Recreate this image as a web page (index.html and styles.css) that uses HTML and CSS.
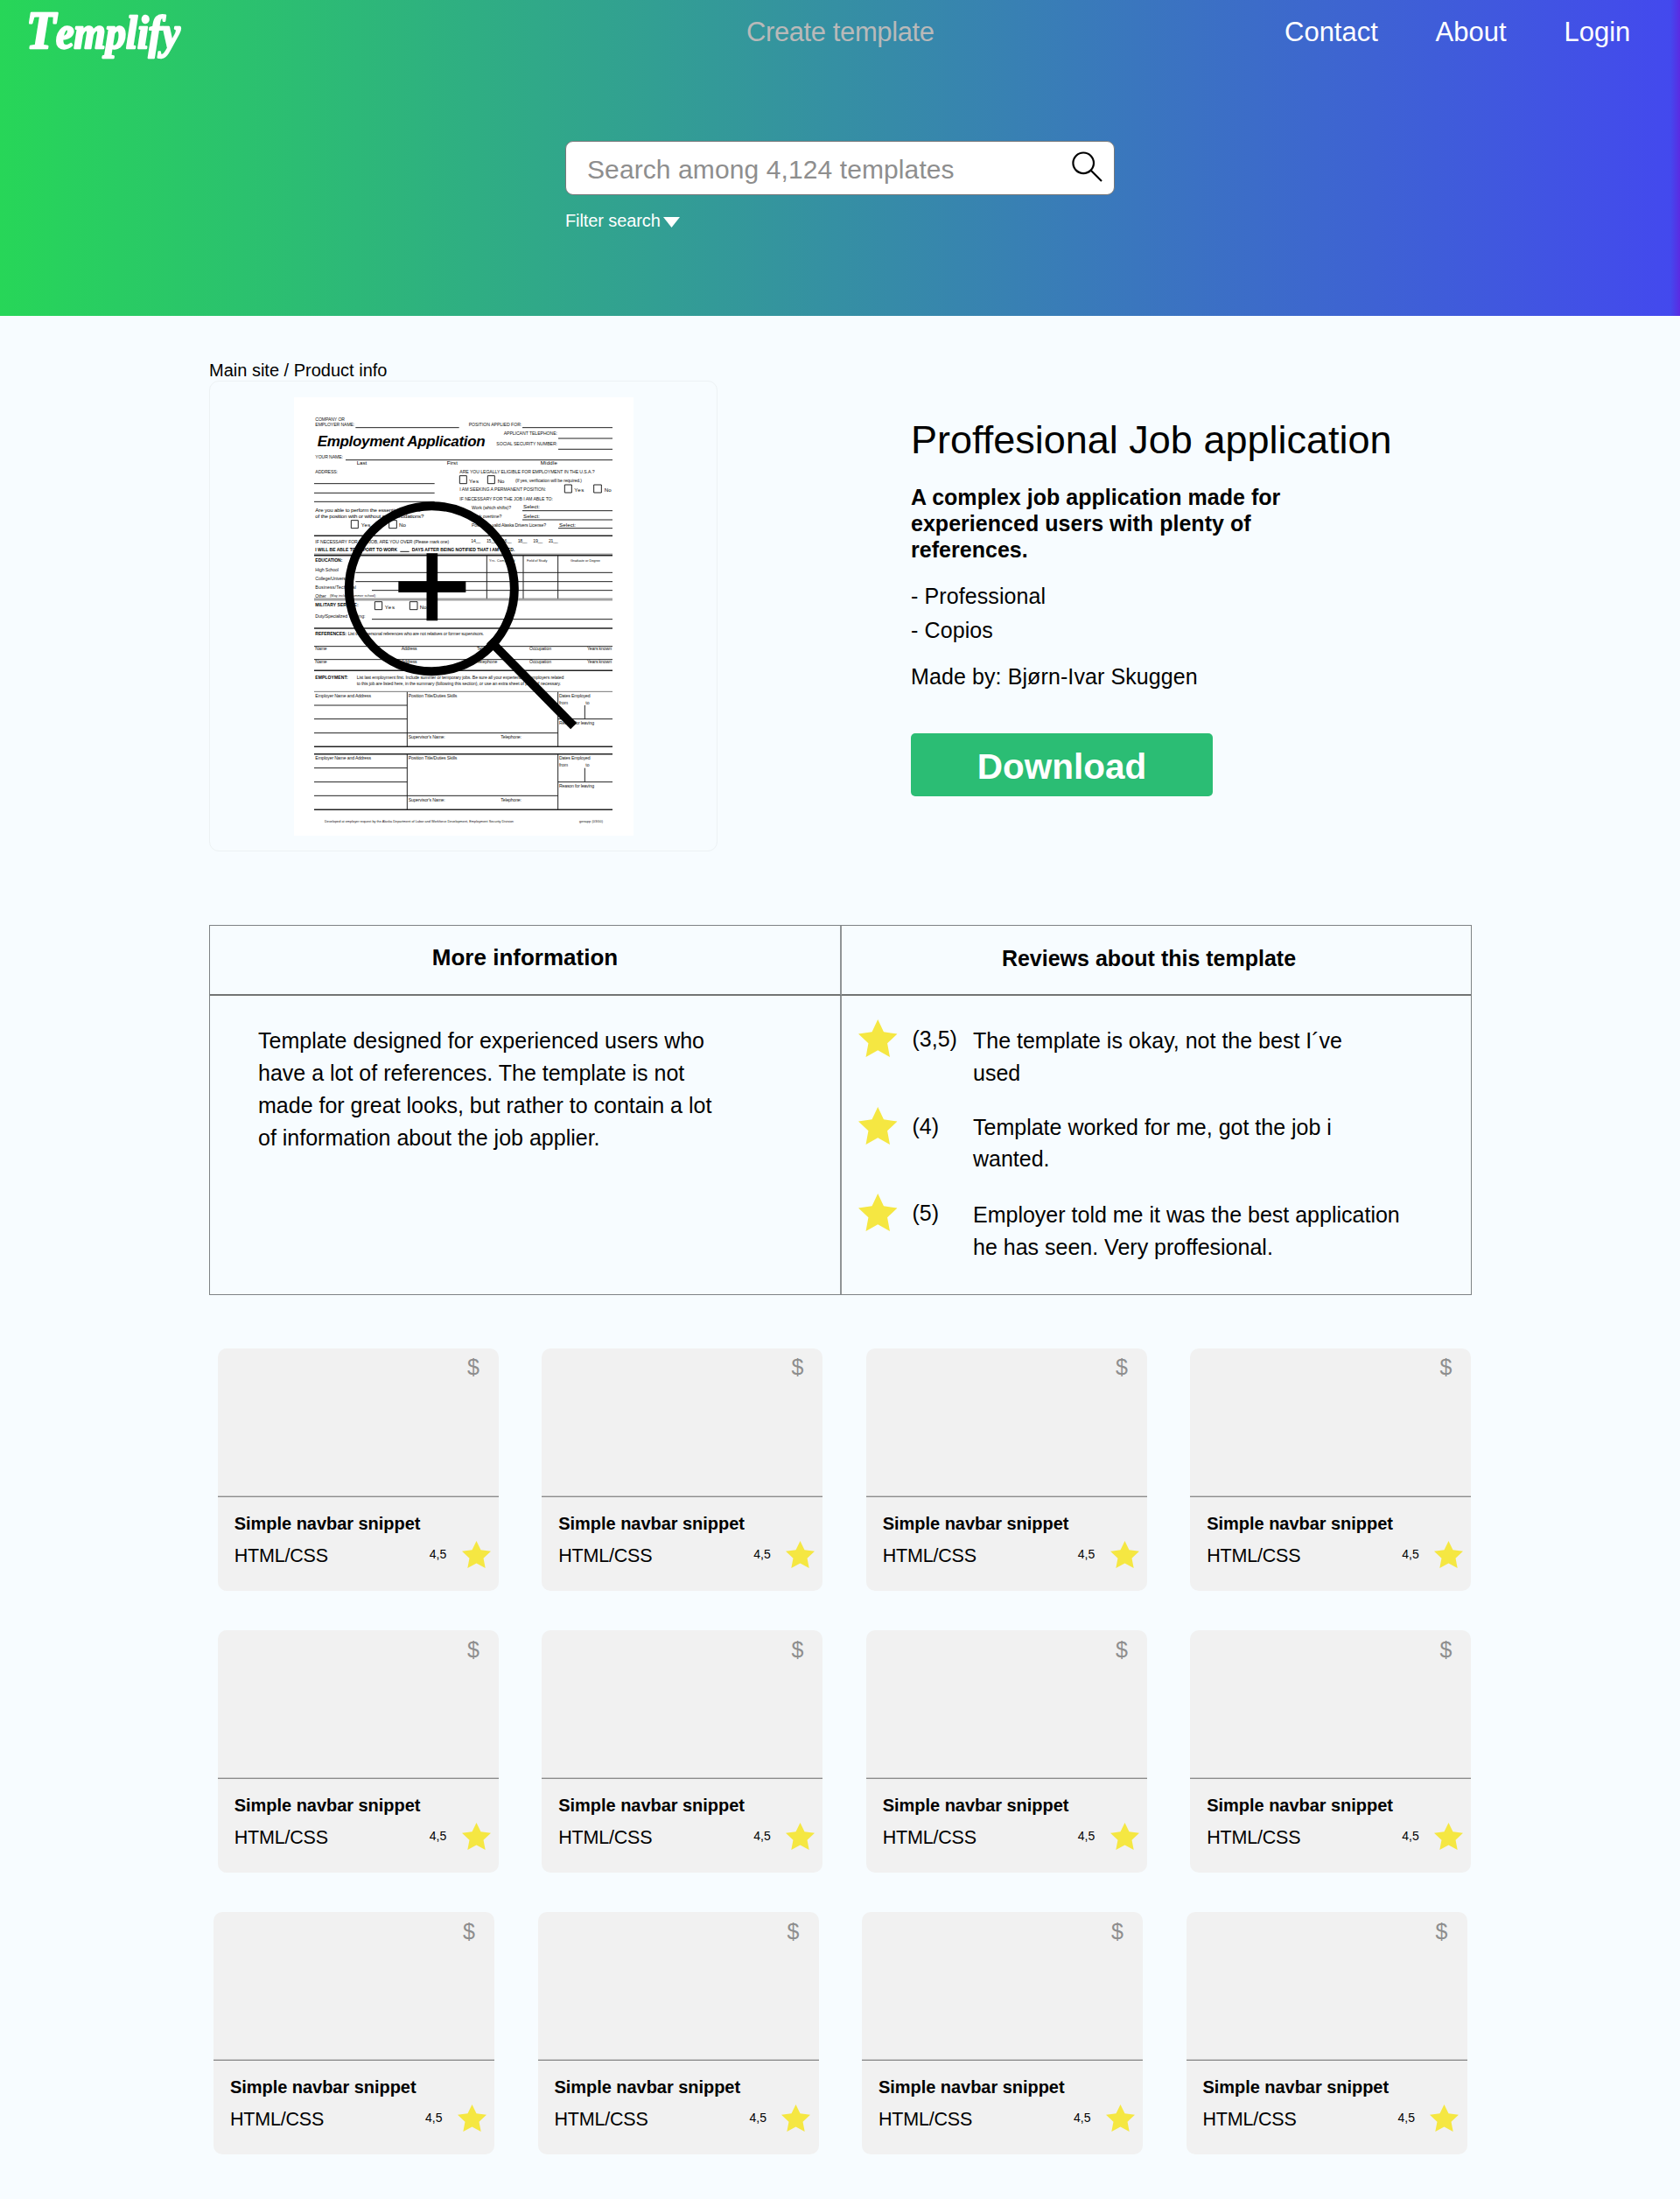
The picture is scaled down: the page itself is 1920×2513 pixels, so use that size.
FILE: index.html
```html
<!DOCTYPE html>
<html lang="en">
<head>
<meta charset="utf-8">
<title>Templify</title>
<link rel="stylesheet" href="styles.css">
</head>
<body>
<svg class="defs" aria-hidden="true">
  <symbol id="star" viewBox="0 0 44.4 42.2" preserveAspectRatio="none">
    <polygon points="22.2,0 28.9,14.1 44.4,16.1 33,26.8 35.9,42.2 22.2,34.7 8.5,42.2 11.4,26.8 0,16.1 15.5,14.1"/>
  </symbol>
</svg>

<header class="hero">
  <nav class="nav">
    <a class="logo"><svg width="200" height="80" viewBox="0 0 200 80"><text x="0" y="55" textLength="176" lengthAdjust="spacingAndGlyphs"><tspan class="logo-cap">T</tspan>emplify</text></svg></a>
    <a class="create">Create template</a>
    <div class="links"><a class="l-contact">Contact</a><a class="l-about">About</a><a class="l-login">Login</a></div>
  </nav>
  <div class="search">
    <div class="search-box">
      <span>Search among 4,124 templates</span>
      <svg class="search-icon" width="26" height="28" viewBox="0 0 26 28"><circle cx="12.200" cy="12.300" r="11.800"/><path d="M20.800 20.700L33 33"/></svg>
    </div>
    <div class="filter"><span>Filter search</span><svg width="19" height="12" viewBox="0 0 19 12"><path d="M0 0H19L9.5 12Z"/></svg></div>
  </div>
</header>

<main class="main">
  <div class="crumb">Main site / Product info</div>
  <section class="product">
    <div class="preview">
      <svg class="sheet" width="388" height="501" viewBox="18 -19 1164 1503">
        <rect class="paper" x="18" y="-19" width="1164" height="1503"/>
        <g class="thin">
          <path d="M229 85H584M801 85H1110M924 122H1110M924 159H1110M195 196H1110M87 277H500M87 309H500M87 339H500M801 370H1110M801 401H1110M924 430H1110M382 510H413"/>
          <path d="M229 582H1110M229 613H1110M285 643H1110M679 523V672M804 523V672M923 523V672M285 742H1110"/>
          <path d="M87 835H1110M87 880H1110M87 1037H406M87 1084H406M87 1132H923M406 990V1178M923 990V1178M923 1084H1110M1015 1037V1084"/>
          <path d="M87 1252H406M87 1300H406M87 1347H923M406 1204V1395M923 1204V1395M923 1300H1110M1015 1252V1300"/>
          <path d="M586 250h24v27h-24zM682 250h24v27h-24zM946 281h24v27h-24zM1046 281h26v27h-26zM214 403h24v27h-24zM344 403h26v27h-26zM295 682h25v27h-25zM415 682h26v27h-26z"/>
        </g>
        <g class="double">
          <path d="M87 671.5H1110M87 676.5H1110M87 518.5H1110M87 990H1110"/>
        </g>
        <g class="thick"><path d="M87 456H1110M87 523H1110M87 773H1110M87 918H1110M87 1179H1110M87 1204.500H1110M87 1395H1110"/></g>
        <g class="form">
          <text x="91" y="63" textLength="101">COMPANY OR</text>
          <text x="91" y="81" textLength="135">EMPLOYER NAME:</text>
          <text x="617" y="81" textLength="182">POSITION APPLIED FOR:</text>
          <text x="737" y="111" textLength="184">APPLICANT TELEPHONE:</text>
          <text x="712" y="147" textLength="209">SOCIAL SECURITY NUMBER:</text>
          <text class="headline" x="98" y="148" textLength="576">Employment Application</text>
          <text x="91" y="192" textLength="95">YOUR NAME:</text>
          <text class="md" x="233" y="213" textLength="35">Last</text>
          <text class="md" x="542" y="213" textLength="37">First</text>
          <text class="md" x="863" y="213" textLength="58">Middle</text>
          <text x="91" y="243" textLength="77">ADDRESS:</text>
          <text x="586" y="243" textLength="463">ARE YOU LEGALLY ELIGIBLE FOR EMPLOYMENT IN THE U.S.A.?</text>
          <text class="md" x="618" y="274" textLength="33">Yes</text>
          <text class="md" x="716" y="274" textLength="23">No</text>
          <text x="777" y="273" textLength="228">(If yes, verification will be required.)</text>
          <text x="586" y="303" textLength="296">I AM SEEKING A PERMANENT POSITION:</text>
          <text class="md" x="979" y="304" textLength="33">Yes</text>
          <text class="md" x="1082" y="304" textLength="24">No</text>
          <text x="586" y="335" textLength="320">IF NECESSARY FOR THE JOB I AM ABLE TO:</text>
          <text x="627" y="365" textLength="135">Work (which shifts)?</text>
          <text class="md" x="804" y="363" textLength="57">Select:</text>
          <text x="627" y="395" textLength="103">Work overtime?</text>
          <text class="md" x="804" y="394" textLength="57">Select:</text>
          <text x="627" y="425" textLength="255">Possess a valid Alaska Drivers License?</text>
          <text class="md" x="927" y="424" textLength="58">Select:</text>
          <text class="md" x="91" y="375" textLength="360">Are you able to perform the essential functions</text>
          <text class="md" x="91" y="395" textLength="372">of the position with or without accommodations?</text>
          <text class="md" x="248" y="425" textLength="32">Yes</text>
          <text class="md" x="378" y="425" textLength="24">No</text>
          <text x="91" y="482" textLength="459">IF NECESSARY FOR THE JOB, ARE YOU OVER (Please mark one)</text>
          <text x="625" y="480" textLength="32">14__</text><text x="678" y="480" textLength="32">15__</text><text x="732" y="480" textLength="32">16__</text>
          <text x="785" y="480" textLength="32">18__</text><text x="838" y="480" textLength="32">19__</text><text x="891" y="480" textLength="32">21__</text>
          <text class="b" x="91" y="508" textLength="281">I WILL BE ABLE TO REPORT TO WORK</text>
          <text class="b" x="422" y="508" textLength="353">DAYS AFTER BEING NOTIFIED THAT I AM HIRED.</text>
          <text class="b" x="91" y="546" textLength="93">EDUCATION:</text>
          <text class="xs" x="687" y="546" textLength="88">Yrs. Completed</text>
          <text class="xs" x="816" y="546" textLength="70">Field of Study</text>
          <text class="xs" x="966" y="546" textLength="102">Graduate or Degree</text>
          <text x="91" y="578" textLength="80">High School</text>
          <text x="91" y="608" textLength="118">College/University</text>
          <text x="91" y="639" textLength="140">Business/Technical</text>
          <text x="91" y="667" textLength="37">Other</text>
          <text class="xs" x="141" y="666" textLength="157">(May include summer school)</text>
          <text class="b" x="91" y="699" textLength="148">MILITARY SERVICE:</text>
          <text class="md" x="329" y="708" textLength="34">Yes</text>
          <text class="md" x="449" y="708" textLength="24">No</text>
          <text x="91" y="738" textLength="171">Duty/Specialized Training:</text>
          <text class="b" x="91" y="798" textLength="107">REFERENCES:</text>
          <text x="203" y="798" textLength="466">List three personal references who are not relatives or former supervisors.</text>
          <text x="91" y="849" textLength="40">Name</text><text x="386" y="849" textLength="54">Address</text><text x="645" y="849" textLength="70">Telephone</text><text x="825" y="849" textLength="75">Occupation</text><text x="1023" y="849" textLength="84">Years known</text>
          <text x="91" y="894" textLength="40">Name</text><text x="386" y="894" textLength="54">Address</text><text x="645" y="894" textLength="70">Telephone</text><text x="825" y="894" textLength="75">Occupation</text><text x="1023" y="894" textLength="84">Years known</text>
          <text class="b" x="91" y="948" textLength="112">EMPLOYMENT:</text>
          <text x="233" y="948" textLength="710">List last employment first. Include summer or temporary jobs. Be sure all your experience or employers related</text>
          <text x="233" y="967" textLength="700">to this job are listed here, in the summary (following this section), or use an extra sheet of paper if necessary.</text>
          <text x="91" y="1009" textLength="191">Employer Name and Address</text>
          <text x="410" y="1009" textLength="167">Position Title/Duties Skills</text>
          <text x="927" y="1009" textLength="107">Dates Employed</text>
          <text x="927" y="1033" textLength="30">from</text><text x="1018" y="1033" textLength="13">to</text>
          <text x="927" y="1104" textLength="120">Reason for leaving</text>
          <text x="410" y="1151" textLength="126">Supervisor's Name:</text>
          <text x="727" y="1151" textLength="71">Telephone:</text>
          <text x="91" y="1224" textLength="191">Employer Name and Address</text>
          <text x="410" y="1224" textLength="167">Position Title/Duties Skills</text>
          <text x="927" y="1224" textLength="107">Dates Employed</text>
          <text x="927" y="1248" textLength="30">from</text><text x="1018" y="1248" textLength="13">to</text>
          <text x="927" y="1319" textLength="120">Reason for leaving</text>
          <text x="410" y="1366" textLength="126">Supervisor's Name:</text>
          <text x="727" y="1366" textLength="71">Telephone:</text>
          <text class="xs" x="123" y="1439" textLength="648">Developed at employer request by the Alaska Department of Labor and Workforce Development, Employment Security Division</text>
          <text class="xs" x="996" y="1439" textLength="81">genapp (03/00)</text>
        </g>
        <g class="magnify">
          <circle cx="490" cy="637" r="283.500"/>
          <path d="M689 815L977 1108"/>
          <path class="plus" d="M491.500 516V747M376 631H607"/>
        </g>
      </svg>
    </div>
    <div class="info">
      <h1>Proffesional Job application</h1>
      <p class="lead">A complex job application made for<br>experienced users with plenty of<br>references.</p>
      <ul><li>- Professional</li><li>- Copios</li></ul>
      <p class="author">Made by: Bjørn-Ivar Skuggen</p>
      <a class="download">Download</a>
    </div>
  </section>

  <section class="details">
    <h2 class="th th-info">More information</h2>
    <h2 class="th th-reviews">Reviews about this template</h2>
    <p class="td description">Template designed for experienced users who<br>have a lot of references. The template is not<br>made for great looks, but rather to contain a lot<br>of information about the job applier.</p>
    <div class="td reviews">
      <div class="review"><svg class="star"><use href="#star"/></svg><span>(3,5)</span><p>The template is okay, not the best I´ve<br>used</p></div>
      <div class="review"><svg class="star"><use href="#star"/></svg><span>(4)</span><p>Template worked for me, got the job i<br>wanted.</p></div>
      <div class="review"><svg class="star"><use href="#star"/></svg><span>(5)</span><p>Employer told me it was the best application<br>he has seen. Very proffesional.</p></div>
    </div>
  </section>

  <section class="cards">
    <div class="row row-first">
      <article class="card"><div class="thumb">$</div><h3>Simple navbar snippet</h3><div class="meta"><span class="tech">HTML/CSS</span><span class="score">4,5</span><svg class="star"><use href="#star"/></svg></div></article>
      <article class="card"><div class="thumb">$</div><h3>Simple navbar snippet</h3><div class="meta"><span class="tech">HTML/CSS</span><span class="score">4,5</span><svg class="star"><use href="#star"/></svg></div></article>
      <article class="card"><div class="thumb">$</div><h3>Simple navbar snippet</h3><div class="meta"><span class="tech">HTML/CSS</span><span class="score">4,5</span><svg class="star"><use href="#star"/></svg></div></article>
      <article class="card"><div class="thumb">$</div><h3>Simple navbar snippet</h3><div class="meta"><span class="tech">HTML/CSS</span><span class="score">4,5</span><svg class="star"><use href="#star"/></svg></div></article>
    </div>
    <div class="row">
      <article class="card"><div class="thumb">$</div><h3>Simple navbar snippet</h3><div class="meta"><span class="tech">HTML/CSS</span><span class="score">4,5</span><svg class="star"><use href="#star"/></svg></div></article>
      <article class="card"><div class="thumb">$</div><h3>Simple navbar snippet</h3><div class="meta"><span class="tech">HTML/CSS</span><span class="score">4,5</span><svg class="star"><use href="#star"/></svg></div></article>
      <article class="card"><div class="thumb">$</div><h3>Simple navbar snippet</h3><div class="meta"><span class="tech">HTML/CSS</span><span class="score">4,5</span><svg class="star"><use href="#star"/></svg></div></article>
      <article class="card"><div class="thumb">$</div><h3>Simple navbar snippet</h3><div class="meta"><span class="tech">HTML/CSS</span><span class="score">4,5</span><svg class="star"><use href="#star"/></svg></div></article>
    </div>
    <div class="row row-last">
      <article class="card"><div class="thumb">$</div><h3>Simple navbar snippet</h3><div class="meta"><span class="tech">HTML/CSS</span><span class="score">4,5</span><svg class="star"><use href="#star"/></svg></div></article>
      <article class="card"><div class="thumb">$</div><h3>Simple navbar snippet</h3><div class="meta"><span class="tech">HTML/CSS</span><span class="score">4,5</span><svg class="star"><use href="#star"/></svg></div></article>
      <article class="card"><div class="thumb">$</div><h3>Simple navbar snippet</h3><div class="meta"><span class="tech">HTML/CSS</span><span class="score">4,5</span><svg class="star"><use href="#star"/></svg></div></article>
      <article class="card"><div class="thumb">$</div><h3>Simple navbar snippet</h3><div class="meta"><span class="tech">HTML/CSS</span><span class="score">4,5</span><svg class="star"><use href="#star"/></svg></div></article>
    </div>
  </section>
</main>
</body>
</html>
```
FILE: styles.css
```css
* { box-sizing: border-box; margin: 0; padding: 0; }
body {
  min-height: 2513px;
  background: #f7fcff;
  color: #000;
  font-family: "Liberation Sans", Arial, Helvetica, sans-serif;
  font-size: 25px;
  white-space: nowrap;
}
svg { display: block; }
ul { list-style: none; }
.defs { position: absolute; width: 0; height: 0; }
.star { fill: #f5e742; }

/* Header */
.hero {
  height: 361px;
  background: linear-gradient(90deg, #27d658 0, #4349ee 1909px, #5a2be2 1920px);
  color: #fff;
}
.nav {
  display: grid;
  grid-template-columns: 853px 615px auto;
  height: 80px;
  font-size: 31px;
  line-height: 74px;
}
.logo { padding-left: 30px; }
.logo svg {
  overflow: visible;
  fill: #fff;
  stroke: #fff;
  stroke-width: 2.4;
  stroke-linejoin: round;
  font: italic bold 52px "Liberation Serif", serif;
}
.logo-cap { font-size: 62px; }
.create { color: #b9b9b9; letter-spacing: -0.4px; }
.links { display: flex; }
.l-contact { width: 172.500px; }
.l-about { width: 147px; }

.search { width: 628px; margin: 81px 0 0 646px; }
.search-box {
  display: flex;
  align-items: flex-start;
  justify-content: space-between;
  height: 62px;
  padding: 12px 21px 0 24px;
  border: 1px solid #77787a;
  border-radius: 9px;
  background: #fff;
  color: #8e8e8e;
  font-size: 30px;
  line-height: 40px;
  letter-spacing: 0.1px;
}
.search-icon {
  overflow: visible;
  fill: none;
  stroke: #000;
  stroke-width: 2.2;
}
.filter { display: flex; align-items: center; gap: 3px; margin-top: 15px; height: 28px; font-size: 20px; line-height: 28px; letter-spacing: -0.1px; }
.filter svg { margin-top: 3px; fill: #fff; }

/* Product */
.main { width: 1443px; margin-left: 239px; }
.crumb { padding-top: 50px; font-size: 20px; line-height: 24px; }
.product { display: flex; height: 538px; }
.preview {
  width: 581px;
  padding: 18px 0 0 96px;
  border: 1px solid #edf2f4;
  border-radius: 11px;
}
.paper { fill: #fff; }
.thin, .double, .thick, .magnify { fill: none; stroke: #222; stroke-width: 3; }
.double { stroke: #777; }
.thick { stroke: #222; stroke-width: 4.5; }
.magnify { stroke: #000; stroke-width: 30; }
.plus { stroke-width: 38; }
.form { font-size: 15.500px; fill: #111; }
.form .md { font-size: 18.500px; fill: #000; }
.form .xs { font-size: 11.500px; }
.form .b { font-weight: bold; font-size: 15px; fill: #000; }
.form .headline { font: italic bold 51px "Liberation Sans", sans-serif; fill: #000; }

.info { padding: 42px 0 0 221px; }
h1 { font-size: 45px; font-weight: normal; line-height: 52px; }
.lead { margin-top: 24px; font-weight: bold; line-height: 30px; letter-spacing: 0.03px; }
.info ul { margin-top: 19px; line-height: 39px; letter-spacing: 0.1px; }
.author { margin-top: 18px; line-height: 30px; letter-spacing: 0.1px; }
.download {
  display: block;
  width: 345px;
  height: 72px;
  margin-top: 50px;
  border-radius: 5px;
  background: #2bbd74;
  color: #fff;
  font-size: 40.500px;
  font-weight: bold;
  line-height: 76px;
  text-align: center;
}

/* Details table */
.details {
  display: grid;
  grid-template-columns: 722px 719px;
  grid-template-rows: 80px 341px;
  height: 423px;
  margin-top: 84px;
  border: 1px solid #7f8385;
}
.th { border-bottom: 2px solid #727474; text-align: center; line-height: 30px; }
.th-info, .description { border-right: 2px solid #909496; }
.th-info { padding-top: 21px; font-size: 26px; }
.th-reviews { padding: 22px 17px 0 0; font-size: 25px; }
.description { padding: 33px 0 0 55px; line-height: 37px; }
.reviews { display: flex; flex-direction: column; gap: 21.500px; padding: 27px 0 0 19px; }
.review { display: grid; grid-template-columns: 61.500px 69.500px auto; height: 78px; line-height: 36.500px; }
.review .star { width: 44.500px; height: 43px; }
.review span { padding-top: 4px; }
.review p { padding-top: 5px; }
.review:first-child p, .review:last-child p { padding-top: 6px; }

/* Template cards */
.cards { display: flex; flex-direction: column; gap: 45px; margin-top: 61px; }
.row { display: flex; gap: 49.500px; padding-left: 9.800px; }
.row-last { padding-left: 5px; }
.card { flex: none; width: 321px; height: 277px; border-radius: 10px; background: #f1f1f1; }
.thumb {
  height: 169px;
  padding: 7px 22px 0 0;
  border-bottom: 1px solid #c9c9c9;
  color: #8e8e8e;
  line-height: 30px;
  text-align: right;
}
.row-first .thumb { padding-top: 6px; }
.card h3 { height: 51px; padding: 18px 0 0 19px; border-top: 1px solid #8c8c8c; font-size: 20px; line-height: 24px; letter-spacing: -0.04px; }
.meta { display: flex; padding-left: 19px; }
.tech { width: 223px; font-size: 21.500px; line-height: 34px; letter-spacing: -0.2px; }
.score { width: 36.800px; font-size: 14px; line-height: 31px; }
.meta .star { width: 33px; height: 31px; }
```
